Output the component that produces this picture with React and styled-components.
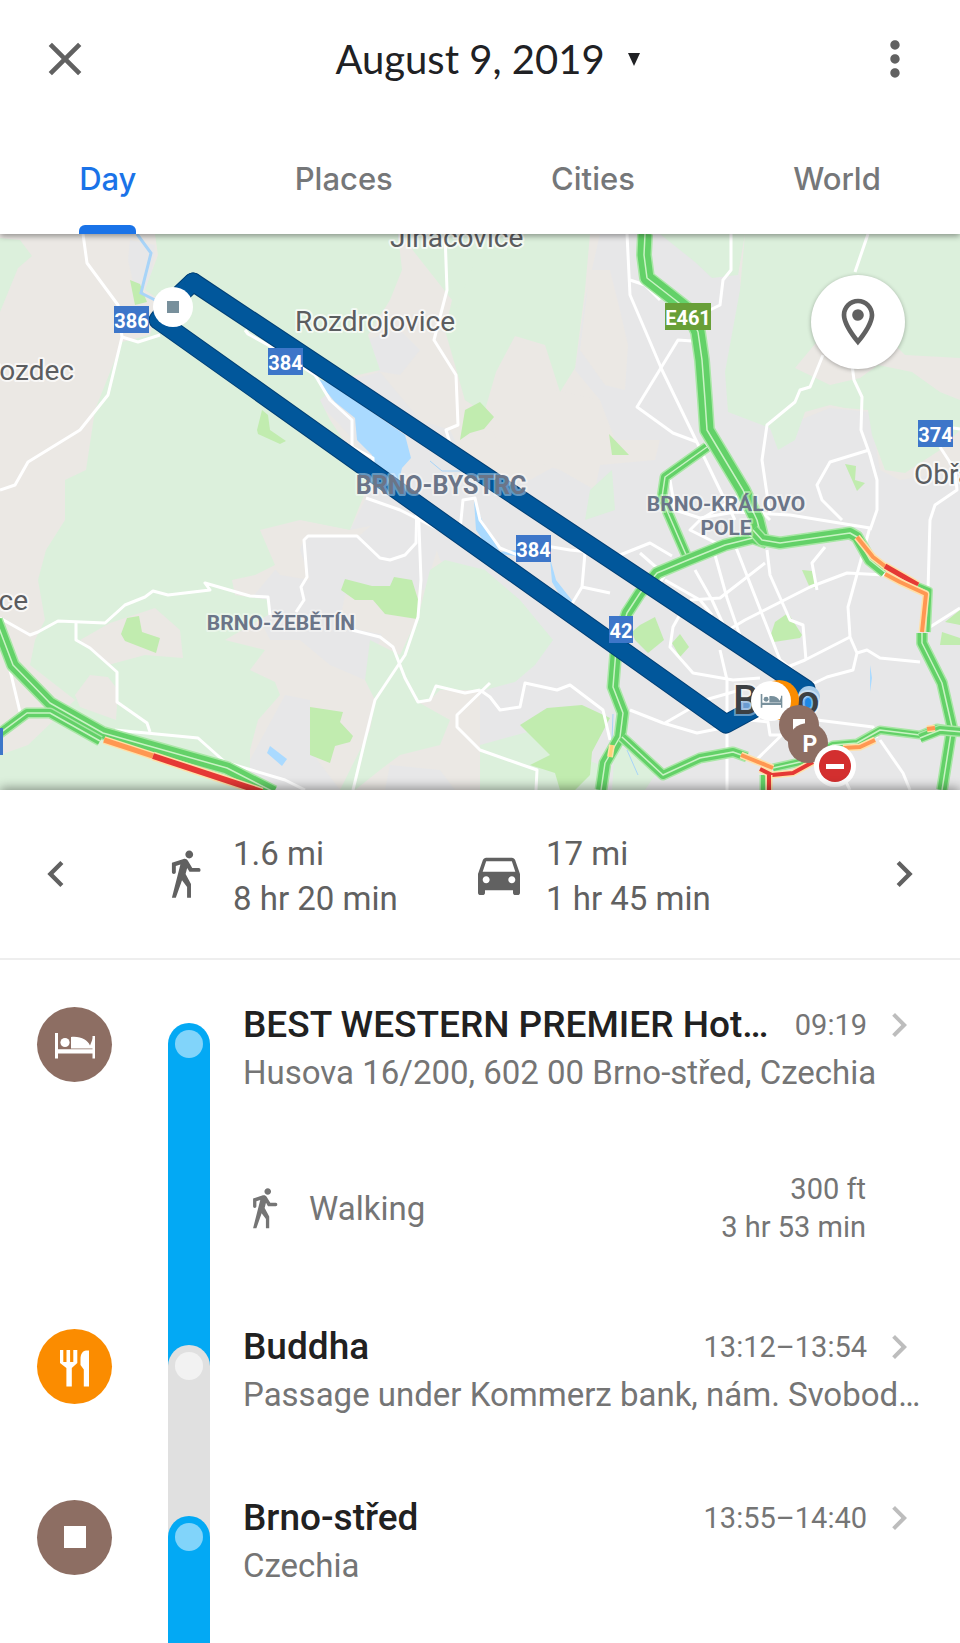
import { Fragment } from "react";
import styled, { createGlobalStyle } from "styled-components";

const GlobalStyle = createGlobalStyle`
* {
    box-sizing: border-box;
}
body {
    margin: 0;
    background-color: #ffffff;
    font-family: Roboto, "Liberation Sans", sans-serif;
}
button {
    border: none;
    background: none;
    padding: 0;
    margin: 0;
    font-family: inherit;
    cursor: pointer;
}
`

const Container = styled.div`
    height: 100vh;
    display: flex;
    flex-direction: column;
    overflow: hidden;
`
const Header = styled.header`
    position: relative; //keeps the shadow above the map
    z-index: 1;
    background-color: #ffffff;
    box-shadow: 0 2px 6px rgba(0, 0, 0, 0.4);
`
const TopBar = styled.div`
    height: 118px;
    padding: 0 37px;
    display: flex;
    align-items: center;
    justify-content: space-between;
`
const IconButton = styled.button`
    display: flex;
    color: #616161;
`
const DateButton = styled.button`
    display: flex;
    align-items: center;
    gap: 22px;
    padding-left: 16px;
    color: #202124;
    font-family: Lato, "Open Sans", sans-serif;
    font-size: 40px;
    line-height: 52px;
`
const Tabs = styled.nav`
    height: 116px;
    display: flex;
    justify-content: space-around;
`
const Tab = styled.button`
    height: 116px;
    border-bottom: 9px solid transparent;
    padding-top: 14px;
    position: relative;
    color: ${props => props.$active ? "#1a73e8" : "#757779"};
    font-family: Inter, "Open Sans", sans-serif;
    font-size: 31px;
    font-weight: 500;

    &::after {
        content: "";
        display: ${props => props.$active ? "block" : "none"};
        position: absolute;
        left: 0;
        right: 0;
        bottom: -9px;
        height: 9px;
        border-radius: 6px 6px 0 0;
        background-color: #1a73e8;
    }
`
const MapArea = styled.section`
    position: relative;
    flex: none;
    height: 556px;
`
const MapSvg = styled.svg`
    display: block;
    width: 100%;
    height: 100%;
    font-family: Roboto, "Liberation Sans", sans-serif;
`
const LocateButton = styled.button`
    position: absolute;
    top: 41px;
    right: 55px;
    width: 94px;
    height: 94px;
    border-radius: 50%;
    background-color: #ffffff;
    box-shadow: 0 1px 4px rgba(0, 0, 0, 0.3);
    color: #616161;
    display: flex;
    align-items: center;
    justify-content: center;
`
const Summary = styled.section`
    position: relative;
    flex: none;
    height: 170px;
    padding: 0 30px;
    display: flex;
    align-items: center;
    background-color: #ffffff;
    border-bottom: 2px solid #eeeeee;
    box-shadow: 0 -2px 10px rgba(0, 0, 0, 0.4);
    color: #616161;
`
const Stats = styled.div`
    flex: 1;
    padding: 0 94px 0 76px;
    display: grid;
    grid-template-columns: 1fr 1fr;
`
const Stat = styled.div`
    display: flex;
    align-items: center;
    gap: 19px;
`
const StatIcon = styled.div`
    width: 56px;
    display: flex;
    justify-content: center;
`
const StatText = styled.p`
    margin: 0;
    padding-top: 3px;
    font-size: 33px;
    line-height: 45px;
    white-space: nowrap;
`
const Timeline = styled.ol`
    position: relative; //covers the shadow under the summary
    z-index: 0;
    background-color: #ffffff;
    flex: 1;
    min-height: 0;
    margin: 0;
    padding: 41px 37px 0;
    list-style: none;
    overflow-y: auto;
    scrollbar-width: none;
`
const Item = styled.li`
    display: flex;
`
const Badge = styled.div`
    flex: none;
    width: 75px;
    height: 75px;
    margin-top: 6px;
    border-radius: 50%;
    background-color: ${props => props.$color};
`
const Rail = styled.div`
    flex: none;
    width: 42px;
    margin: 0 33px 0 56px;
    display: flex;
    background-color: ${props => props.$before};
    padding-top: 22px;
`
const Segment = styled.div`
    flex: 1;
    padding-top: 7px;
    border-radius: 21px 21px 0 0;
    background-color: ${props => props.$color};
`
const Dot = styled.div`
    width: 28px;
    height: 28px;
    margin: 0 auto;
    border-radius: 50%;
    background-color: ${props => props.$color};
`
const Content = styled.div`
    flex: 1;
    min-width: 0;
    padding-bottom: 75px;
`
const TitleRow = styled.div`
    height: 48px;
    display: flex;
    align-items: center;
`
const Title = styled.h2`
    margin: 0;
    flex: 1;
    font-size: 37px;
    line-height: 48px;
    font-weight: 500;
    color: #212121;
    white-space: nowrap;
    overflow: hidden;
    text-overflow: ellipsis;
`
const Time = styled.time`
    margin: 0 8px 0 20px;
    font-size: 29px;
    line-height: 46px;
    color: #757575;
`
const Address = styled.p`
    margin: 0;
    font-size: 33px;
    line-height: 48px;
    color: #757575;
    white-space: nowrap;
    overflow: hidden;
    text-overflow: ellipsis;
`
const Leg = styled.div`
    margin: 73px 0 2px;
    padding-right: 57px;
    display: flex;
    align-items: center;
    gap: 22px;
    color: #757575;
`
const LegMode = styled.span`
    flex: 1;
    font-size: 33px;
`
const LegStats = styled.p`
    margin: 0;
    text-align: right;
    font-size: 29px;
    line-height: 38px;
`

const Icon = ({ size, d, viewBox = "0 0 24 24", color = "currentColor" }) => (
    <svg width={size} height={size} viewBox={viewBox} fill={color} aria-hidden="true">
        <path d={d} />
    </svg>
);

const paths = {
    close: "M19 6.41 17.59 5 12 10.59 6.41 5 5 6.41 10.59 12 5 17.59 6.41 19 12 13.41 17.59 19 19 17.59 13.41 12z",
    more: "M12 8c1.1 0 2-.9 2-2s-.9-2-2-2-2 .9-2 2 .9 2 2 2zm0 2c-1.1 0-2 .9-2 2s.9 2 2 2 2-.9 2-2-.9-2-2-2zm0 6c-1.1 0-2 .9-2 2s.9 2 2 2 2-.9 2-2-.9-2-2-2z",
    left: "M15.41 7.41 14 6l-6 6 6 6 1.41-1.41L10.83 12z",
    right: "M10 6 8.59 7.41 13.17 12l-4.58 4.59L10 18l6-6z",
    place: "M12 2C8.13 2 5 5.13 5 9c0 5.25 7 13 7 13s7-7.75 7-13c0-3.87-3.13-7-7-7zM7 9c0-2.76 2.24-5 5-5s5 2.24 5 5c0 2.88-2.88 7.19-5 9.88C9.92 16.21 7 11.85 7 9zm5-2.5a2.5 2.5 0 1 0 0 5 2.5 2.5 0 0 0 0-5z",
    walk: "M14.12 10H18.4c.5 0 .8-.4.8-.9s-.3-.9-.8-.9H15.380l-2-3.330c-.3-.5-.84-.87-1.500-.87-.18 0-.35.030-.5.080L6 5.800V10.100c0 .5.4.9.9.9s.9-.4.9-.9V7.330l2.110-.66L6 22h1.800l2.870-8.110L13 17v5h1.800v-6.410l-2.490-4.540.73-2.870zM14 3.800c.99 0 1.800-.81 1.800-1.800S14.990.2 14 .2c-1 0-1.800.81-1.800 1.800S13 3.800 14 3.800z",
    car: "M18.92 6.01C18.72 5.42 18.16 5 17.5 5h-11c-.66 0-1.21.42-1.42 1.01L3 12v8c0 .55.45 1 1 1h1c.55 0 1-.45 1-1v-1h12v1c0 .55.45 1 1 1h1c.55 0 1-.45 1-1v-8l-2.08-5.99zM6.5 16c-.83 0-1.5-.67-1.5-1.5S5.67 13 6.5 13s1.5.67 1.5 1.5S7.33 16 6.5 16zm11 0c-.83 0-1.5-.67-1.5-1.5s.67-1.5 1.5-1.5 1.5.67 1.5 1.5-.67 1.5-1.5 1.5zM5 11l1.5-4.5h11L19 11H5z",
};

const WalkIcon = ({ size }) => <Icon size={size} d={paths.walk} viewBox="0.500 -1 24 24" />;

const BedShape = ({ color }) => (
    <g fill={color}>
        <path d="M18 26h3v16.300h34.500V29H58v22.500h-2.500V46.500H21v5h-3z" />
        <circle cx="28" cy="35.500" r="4.600" />
        <path d="M34 30C44 29 50.500 33 53 38.500L56 31V41.500H34z" />
    </g>
);

const BadgeGlyph = ({ type }) => (
    <svg width="75" height="75" viewBox="0 0 75 75" aria-hidden="true">
        {type === "bed" && <BedShape color="#fff" />}
        {type === "food" && (
            <g fill="#fff">
                <path d="M23 21h3.300v12h3.200V21h3.600v12h3.200V21h4v13l-5.500 5v18.500h-5.400V39L23 34z" />
                <path d="M52 21.500V57.500H46.800V40.500L43.500 36V30C43.500 25 46 21.500 49 21.500z" />
            </g>
        )}
        {type === "stop" && <rect x="27" y="26" width="22" height="22" fill="#fff" />}
    </svg>
);

// ---- map data ----

const urban = [
    "600,234 735,234 742,300 726,372 728,412 775,425 780,448 800,420 830,408 870,412 880,470 900,480 960,470 960,790 300,790 480,790 480,600 440,560 420,500 470,470 530,480 575,455 600,400 575,370 585,300",
    "300,550 305,537 358,537 400,500 440,540 425,590 390,600 380,640 365,680 330,665 300,640 270,640 250,600 275,570",
    "350,380 380,372 420,420 450,430 470,470 400,520 350,530 380,470 340,425 315,400",
    "365,340 400,330 420,350 400,375 370,370",
    "130,240 155,245 150,290 135,290 128,260",
    "285,695 310,700 310,750 340,790 240,790 250,760",
    "390,765 440,770 455,790 385,790",
];
const fields = [
    "590,270 610,270 620,310 628,345 625,390 605,385 580,350",
    "495,370 515,336 545,350 555,390 600,400 615,440 660,440 655,460 600,465 595,490 560,470 500,450 490,420",
    "815,330 840,370 880,365 905,350 960,358 960,398 935,390 900,370 870,375 795,368",
    "270,520 300,550 310,580 280,575 258,548",
    "345,595 420,590 435,590 425,610 410,640 360,630 340,620",
];
const woods = [
    "0,238 20,240 32,256 18,268 0,312",
    "155,234 398,234 402,270 390,300 368,335 380,370 345,378 320,400 330,420 350,450 372,475 350,530 300,520 260,530 275,565 255,575 232,580 235,595 270,600 268,615 225,640 265,650 250,670 275,682 280,695 258,720 250,750 250,790 0,790 0,755 28,745 75,700 30,665 35,640 45,620 38,580 46,550 65,520 65,480 86,470 95,410 122,342 150,335 160,300 145,290 158,255",
    "400,234 590,234 585,290 575,368 560,392 545,345 515,336 496,372 485,410 465,400 445,330 452,300",
    "480,250 480,410 465,400 447,330",
    "660,234 745,234 738,275 712,278 695,262",
    "745,234 960,234 960,358 905,355 880,330 820,338 795,368 830,385 860,378 878,365 912,372 940,392 960,400 960,430 940,450 905,473 885,470 872,435 868,410 845,408 830,405 805,412 795,440 778,450 770,428 728,412 725,372 740,290",
    "430,570 445,560 485,570 520,600 553,640 535,665 515,682 485,690 440,690 430,700 418,702 450,720 440,745 400,755 380,770 355,790 340,790 370,730 375,700 365,680 370,640 400,655 418,617",
    "480,745 535,730 540,740 600,765 600,790 480,790",
    "615,745 640,755 655,775 645,790 612,790",
    "590,490 612,470 615,510 585,520",
];
const clearings = [
    "110,623 155,608 180,630 183,658 145,655 108,665 80,640",
    "75,695 90,675 108,677 118,690 116,720 80,707",
];
const parks = [
    "130,280 140,284 147,302 135,305",
    "257,430 262,410 268,415 270,430 286,441 280,444 258,434",
    "460,440 465,410 480,402 494,417 484,429 470,433",
    "609,434 629,455 612,455",
    "341,590 345,579 372,586 390,586 394,577 412,580 420,606 417,619 385,614 373,600 355,600",
    "121,634 127,618 139,616 142,632 160,638 156,653 125,641",
    "310,707 343,712 340,722 353,736 350,742 335,746 330,763 310,755",
    "845,464 856,466 855,480 865,483 857,491",
    "802,570 812,571 817,587 810,588",
    "771,634 775,622 788,613 802,635 800,638 774,642",
    "632,632 640,625 655,617 664,640 648,653 635,640",
    "672,643 680,634 689,647 680,657",
    "520,725 547,708 582,705 610,718 592,752 590,775 575,790 560,790 555,773 530,765 550,755",
    "942,632 960,638 960,645 940,645",
    "945,622 960,610 960,625",
];
const water = [
    "315,378 330,383 405,435 411,458 402,468 398,485 374,468 372,455 357,440 355,418 335,402",
    "267,753 270,746 287,759 282,766",
    "474,500 482,520 500,552 516,550 516,556 492,553 476,530",
    "550,558 556,580 574,603 566,606 552,582",
    "870,665 872,678 870,692",
];
const roads = [
    "83,234 87,263 118,305 122,337 108,395 80,430 28,462 15,485 0,490",
    "122,337 138,342 160,335",
    "245,330 248,334 268,345 315,375 330,400 352,420 352,447 373,458 373,470",
    "445,234 447,290 434,340 456,375 458,425 446,430 452,450 470,465",
    "366,498 400,510 440,530",
    "0,618 30,635 38,632 58,621 105,623 125,605 145,597 153,591 168,595 210,590 205,583 250,596 268,597 270,615",
    "76,623 76,640 90,648 117,672 117,702 147,723 150,732",
    "115,730 198,738 225,762 285,780 305,790",
    "296,612 304,600 301,587 307,577 304,540 308,536 357,536 380,558 390,560 405,555 416,543 417,500",
    "418,500 421,580 418,617 405,655 375,700 365,740 353,790",
    "352,630 380,637 393,647 405,678 418,702 430,700 436,686 465,693 480,690",
    "490,683 457,715 457,727 480,750 517,763 537,770 536,790",
    "10,670 20,712",
    "460,530 463,500 475,498 480,520 500,548 520,556",
    "627,234 630,295 645,330 662,370 720,490 735,520",
    "630,280 645,285 660,300",
    "692,341 678,340 637,407 673,433 697,442",
    "731,234 731,270 723,280 720,305 710,310",
    "868,234 855,272",
    "823,355 810,387 800,390 795,402 767,425 762,460 770,515",
    "852,365 854,380 862,397 861,430 870,455 877,480 877,510 870,530",
    "869,450 830,462 817,485 822,500 842,520",
    "940,447 955,470 957,490 935,505 930,520 928,590",
    "953,428 960,429",
    "663,475 670,480 675,510 700,518 735,512 790,515 870,528",
    "700,520 690,530 720,545",
    "735,545 780,660 795,672",
    "695,570 712,600 735,650",
    "715,555 727,598 745,650",
    "690,600 720,598 765,563",
    "720,635 745,620 810,587 847,573 885,575",
    "767,550 770,575 790,620 803,625 806,660",
    "817,590 812,563 825,547",
    "870,527 848,607 850,637 857,653 853,670 827,677 800,690",
    "850,637 805,660 775,672",
    "857,653 867,650 880,658 920,662",
    "930,627 960,608",
    "480,690 490,697 500,710 520,707 525,683 557,690 570,685 603,710 610,740",
    "630,710 663,723 697,733 727,727 760,718",
    "665,723 705,700 740,690",
    "720,650 727,680 727,790",
    "688,600 673,627 670,647 693,673 733,680 760,678",
    "817,720 873,727 877,738",
    "790,727 753,763",
    "795,735 770,735 768,722 750,720",
    "880,740 903,773 910,790",
    "555,530 585,553 582,587 570,607 550,600",
    "582,587 610,593",
    "540,545 570,550 620,555 650,543 672,556",
    "640,553 665,575 655,590",
    "700,520 740,495 755,505 770,520",
    "665,580 700,600 712,615",
    "830,750 850,790",
];
const traffic = [
    { w: 13, p: "645,234 644,255 647,278 665,292 688,310 698,332 702,360 705,400 707,430 722,455 743,490 757,520 762,540" },
    { w: 8, p: "707,447 665,477 662,497 668,513 687,557" },
    { w: 10, p: "767,543 753,538 725,545 688,560 657,573 640,593 627,613 616,650 613,687 623,713 620,737 605,763 601,790" },
    { w: 10, p: "753,530 762,540 780,543 850,533 857,537 870,560 885,572" },
    { w: 3, p: "918,585 930,590 928,632" },
    { w: 9, p: "922,633 922,643 942,683 952,727 942,790" },
    { w: 8, p: "622,737 663,775 700,758 733,752 747,757" },
    { w: 6, p: "773,768 800,762 833,745 857,743 880,730 920,735 937,728 960,732" },
    { w: 8, p: "920,738 940,730 962,732" },
    { w: 4, p: "763,775 763,790" },
    { w: 11, p: "-4,620 13,665 50,703 103,733 227,768 274,792" },
    { w: 8, p: "-4,736 27,713 50,713 100,741" },
];
const slow = [
    { c: "#ff9752", w: 5, p: "104,740 153,756" },
    { c: "#e53935", w: 6, p: "153,756 262,792" },
    { c: "#ff9752", w: 4, p: "857,537 873,557 886,567" },
    { c: "#e53935", w: 5, p: "885,566 918,585" },
    { c: "#ff9752", w: 4, p: "885,574 900,582 926,594 922,632" },
    { c: "#ff9752", w: 4, p: "741,755 773,768" },
    { c: "#e53935", w: 4, p: "760,769 772,775 793,773 813,762" },
    { c: "#e53935", w: 4, p: "769,775 769,790" },
    { c: "#ff9752", w: 4, p: "843,748 860,747 875,740" },
    { c: "#ff9752", w: 4, p: "927,729 935,728" },
    { c: "#ffd27a", w: 3, p: "612,745 610,757" },
];
const shields = [
    { x: 114, y: 306, text: "386" },
    { x: 268, y: 348, text: "384" },
    { x: 516, y: 535, text: "384" },
    { x: 609, y: 616, text: "42", w: 24 },
    { x: 665, y: 303, text: "E461", w: 46, color: "#689f38" },
    { x: 918, y: 420, text: "374" },
    { x: -32, y: 728, text: "38" },
];
const towns = [
    { x: 390, y: 247, text: "Jinačovice" },
    { x: 295, y: 331, text: "Rozdrojovice" },
    { x: 74, y: 380, text: "Hvozdec", anchor: "end" },
    { x: 28, y: 610, text: "ce", anchor: "end" },
    { x: 914, y: 484, text: "Obřany" },
];
const districts = [
    { x: 441, y: 494, text: "BRNO-BYSTRC", size: 25 },
    { x: 726, y: 511, text: "BRNO-KRÁLOVO", size: 21 },
    { x: 726, y: 535, text: "POLE", size: 21 },
    { x: 281, y: 630, text: "BRNO-ŽEBĚTÍN", size: 21 },
];
const route = "193,282 174,300 158,320 726,724 785,692";
const routeBack = "193,282 806,689";

const Polygons = ({ list, fill }) => (
    <g fill={fill}>
        {list.map((p, i) => <polygon key={i} points={p} />)}
    </g>
);

const DayMap = () => (
    <MapSvg viewBox="0 234 960 556" preserveAspectRatio="xMidYMid slice" role="img" aria-label="Map of Brno">
        <rect x="0" y="234" width="960" height="556" fill="#ebe8e4" />
        <Polygons list={urban} fill="#e7e7e8" />
        <Polygons list={fields} fill="#ebe8e4" />
        <Polygons list={woods} fill="#dcf0dc" />
        <Polygons list={clearings} fill="#ebe8e4" />
        <Polygons list={parks} fill="#c1ecaf" />
        <Polygons list={water} fill="#aadaff" />
        <g fill="none" stroke="#fff" strokeWidth="3" strokeLinejoin="round">
            {roads.map((p, i) => <polyline key={i} points={p} />)}
        </g>
        <path d="M137 234L151 253L141 293L155 300" fill="none" stroke="#a8d4f8" strokeWidth="3" />
        <path d="M430 461L442 471H462M613 714L612 740M627 750L638 775" fill="none" stroke="#a8d4f8" strokeWidth="1" />
        {traffic.map((t, i) => (
            <g key={i} fill="none" strokeLinejoin="round">
                <polyline points={t.p} stroke="#a9e7a6" strokeWidth={t.w + 3} />
                <polyline points={t.p} stroke="#63d168" strokeWidth={t.w} />
                {t.w > 5 && <polyline points={t.p} stroke="#c9f3c4" strokeWidth="1.500" />}
            </g>
        ))}
        {slow.map((t, i) => (
            <g key={i} fill="none" strokeLinejoin="round">
                <polyline points={t.p} stroke="#ffe0a8" strokeWidth={t.w + 3} />
                <polyline points={t.p} stroke={t.c} strokeWidth={t.w} />
            </g>
        ))}
        {[route, routeBack].map(p => (
            <polyline key={p} points={p} fill="none" stroke="#003f75" strokeWidth="19" strokeLinejoin="round" strokeLinecap="round" />
        ))}
        {[route, routeBack].map(p => (
            <polyline key={p} points={p} fill="none" stroke="#01579b" strokeWidth="17" strokeLinejoin="round" strokeLinecap="round" />
        ))}
        {shields.map((s, i) => (
            <g key={i}>
                <rect x={s.x} y={s.y} width={s.w || 35} height="27" fill={s.color || "#3d76c9"} />
                <text x={s.x + (s.w || 35) / 2} y={s.y + 22} textAnchor="middle" fontSize="20" fontWeight="700" fill="#fff">{s.text}</text>
            </g>
        ))}
        <g paintOrder="stroke" stroke="#fff" strokeOpacity="0.7" strokeWidth="4" strokeLinejoin="round">
            {towns.map(t => (
                <text key={t.text} x={t.x} y={t.y} textAnchor={t.anchor} fontSize="28" fill="#5b5d60">{t.text}</text>
            ))}
        </g>
        <g paintOrder="stroke" stroke="#fff" strokeOpacity="0.4" strokeWidth="4" strokeLinejoin="round">
            {districts.map(t => (
                <text key={t.text} x={t.x} y={t.y} textAnchor="middle" fontSize={t.size} fontWeight="700" fill="#6b7588">{t.text}</text>
            ))}
        </g>
        <circle cx="809" cy="697" r="11" fill="#a9cdea" />
        <circle cx="810" cy="703" r="7" fill="#1e88e5" />
        <circle cx="746" cy="706" r="6" fill="#6a9ad0" />
        <text x="733" y="714" fontSize="41" fontWeight="500" fill="#3c4043" paintOrder="stroke" stroke="#fff" strokeOpacity="0.4" strokeWidth="4">Brno</text>
        <circle cx="173" cy="307" r="20" fill="#fff" />
        <rect x="167" y="301" width="12" height="12" fill="#78909c" />
        <circle cx="779" cy="700" r="20" fill="#fb8c00" />
        <circle cx="771" cy="701" r="20" fill="#fff" />
        <g transform="translate(751 680) scale(0.54)">
            <BedShape color="#78909c" />
        </g>
        <circle cx="799" cy="725" r="20" fill="#8d6e63" />
        <rect x="793" y="719" width="12" height="12" fill="#fff" />
        <circle cx="808" cy="743" r="20" fill="#8d6e63" />
        <text x="810" y="752" textAnchor="middle" fontSize="23" fontWeight="700" fill="#fff">P</text>
        <circle cx="835" cy="766" r="21" fill="#fff" />
        <circle cx="835" cy="766" r="16" fill="#d32f2f" />
        <rect x="826" y="764" width="18" height="5" fill="#fff" />
    </MapSvg>
);

const tabs = ["Day", "Places", "Cities", "World"];

const blue = { line: "#03a9f4", dot: "#81d4fa" };
const grey = { line: "#e0e0e0", dot: "#f2f2f2" };

const stops = [
    {
        badge: "bed",
        badgeColor: "#8d6e63",
        rail: blue,
        title: "BEST WESTERN PREMIER Hotel International",
        time: "09:19",
        address: "Husova 16/200, 602 00 Brno-střed, Czechia",
        leg: { mode: "Walking", distance: "300 ft", duration: "3 hr 53 min" },
    },
    {
        badge: "food",
        badgeColor: "#fb8c00",
        rail: grey,
        title: "Buddha",
        time: "13:12–13:54",
        address: "Passage under Kommerz bank, nám. Svobody, Brno",
    },
    {
        badge: "stop",
        badgeColor: "#8d6e63",
        rail: blue,
        title: "Brno-střed",
        time: "13:55–14:40",
        address: "Czechia",
    },
];

const App = () => {
    return (
        <Fragment>
            <GlobalStyle />
            <Container>
                <Header>
                    <TopBar>
                        <IconButton aria-label="Close">
                            <Icon size={56} d={paths.close} />
                        </IconButton>
                        <DateButton>
                            August 9, 2019
                            <svg width="14" height="13" viewBox="0 0 14 13" aria-hidden="true">
                                <path d="M1 0H13L7 13z" fill="#202124" />
                            </svg>
                        </DateButton>
                        <IconButton aria-label="More options">
                            <Icon size={56} d={paths.more} />
                        </IconButton>
                    </TopBar>
                    <Tabs>
                        {tabs.map((tab, i) => (
                            <Tab key={tab} $active={i === 0}>{tab}</Tab>
                        ))}
                    </Tabs>
                </Header>
                <MapArea>
                    <DayMap />
                    <LocateButton aria-label="Show places">
                        <Icon size={56} d={paths.place} />
                    </LocateButton>
                </MapArea>
                <Summary>
                    <IconButton aria-label="Previous day">
                        <Icon size={52} d={paths.left} />
                    </IconButton>
                    <Stats>
                        <Stat>
                            <StatIcon><WalkIcon size={52} /></StatIcon>
                            <StatText>1.6 mi<br />8 hr 20 min</StatText>
                        </Stat>
                        <Stat>
                            <StatIcon><Icon size={56} d={paths.car} /></StatIcon>
                            <StatText>17 mi<br />1 hr 45 min</StatText>
                        </Stat>
                    </Stats>
                    <IconButton aria-label="Next day">
                        <Icon size={52} d={paths.right} />
                    </IconButton>
                </Summary>
                <Timeline>
                    {stops.map((stop, i) => {
                        //the previous stretch shows behind the round cap
                        const before = i > 0 ? stops[i - 1].rail.line : "transparent";
                        return (
                            <Item key={stop.title}>
                                <Badge $color={stop.badgeColor}>
                                    <BadgeGlyph type={stop.badge} />
                                </Badge>
                                <Rail $before={before}>
                                    <Segment $color={stop.rail.line}>
                                        <Dot $color={stop.rail.dot} />
                                    </Segment>
                                </Rail>
                                <Content>
                                    <TitleRow>
                                        <Title>{stop.title}</Title>
                                        <Time>{stop.time}</Time>
                                        <IconButton aria-label={`Open ${stop.title}`}>
                                            <Icon size={48} d={paths.right} color="#bdbdbd" />
                                        </IconButton>
                                    </TitleRow>
                                    <Address>{stop.address}</Address>
                                    {stop.leg && (
                                        <Leg>
                                            <WalkIcon size={44} />
                                            <LegMode>{stop.leg.mode}</LegMode>
                                            <LegStats>{stop.leg.distance}<br />{stop.leg.duration}</LegStats>
                                        </Leg>
                                    )}
                                </Content>
                            </Item>
                        );
                    })}
                </Timeline>
            </Container>
        </Fragment>
    )
};

export default App;
